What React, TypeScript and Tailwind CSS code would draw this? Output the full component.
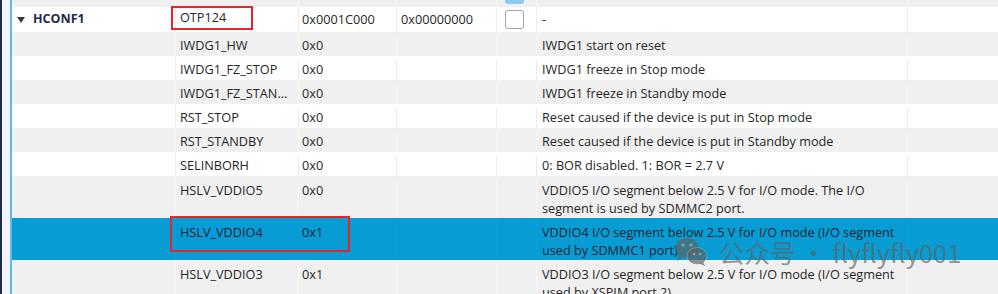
import React from "react";

type Row = {
  name: string;
  value: string;
  desc: string[];
  tall?: boolean;
  selected?: boolean;
  boxed?: boolean;
};

const ROWS: Row[] = [
  { name: "IWDG1_HW", value: "0x0", desc: ["IWDG1 start on reset"] },
  { name: "IWDG1_FZ_STOP", value: "0x0", desc: ["IWDG1 freeze in Stop mode"] },
  { name: "IWDG1_FZ_STAN...", value: "0x0", desc: ["IWDG1 freeze in Standby mode"] },
  { name: "RST_STOP", value: "0x0", desc: ["Reset caused if the device is put in Stop mode"] },
  { name: "RST_STANDBY", value: "0x0", desc: ["Reset caused if the device is put in Standby mode"] },
  { name: "SELINBORH", value: "0x0", desc: ["0: BOR disabled. 1: BOR = 2.7 V"] },
  {
    name: "HSLV_VDDIO5",
    value: "0x0",
    desc: ["VDDIO5 I/O segment below 2.5 V for I/O mode. The I/O", "segment is used by SDMMC2 port."],
    tall: true,
  },
  {
    name: "HSLV_VDDIO4",
    value: "0x1",
    desc: ["VDDIO4 I/O segment below 2.5 V for I/O mode (I/O segment", "used by SDMMC1 port)"],
    tall: true,
    selected: true,
    boxed: true,
  },
  {
    name: "HSLV_VDDIO3",
    value: "0x1",
    desc: ["VDDIO3 I/O segment below 2.5 V for I/O mode (I/O segment", "used by XSPIM port 2)"],
    tall: true,
  },
];

function rowBg(i: number, selected?: boolean) {
  if (selected) return "bg-[#079dd4]";
  return i % 2 === 0 ? "bg-[#f0f0f0]" : "bg-white";
}

function divider(i: number, selected?: boolean) {
  if (selected) return "border-[#0a9fd5]";
  return i % 2 === 0 ? "border-[#f8f8f8]" : "border-[#ececec]";
}

function WeChatMark() {
  return (
    <svg width="34" height="30" viewBox="0 0 34 30" fill="currentColor">
      <ellipse cx="13" cy="11" rx="12" ry="10" />
      <path d="M5 18 L3 24 L10 20 Z" />
      <ellipse cx="23" cy="19" rx="10" ry="8.5" stroke="#ffffff" strokeOpacity="0.25" strokeWidth="1" />
      <path d="M29 25 L31 29 L25 26.5 Z" />
      <circle cx="9" cy="8" r="1.6" fill="#ffffff" fillOpacity="0.35" />
      <circle cx="17" cy="8" r="1.6" fill="#ffffff" fillOpacity="0.35" />
      <circle cx="20" cy="17" r="1.3" fill="#ffffff" fillOpacity="0.35" />
      <circle cx="26" cy="17" r="1.3" fill="#ffffff" fillOpacity="0.35" />
    </svg>
  );
}

export default function App() {
  return (
    <div
      className="relative flex w-[998px] h-[294px] overflow-hidden bg-white text-[12.7px] text-[#262626]"
      style={{ fontFamily: '"Open Sans", "Noto Sans", sans-serif' }}
    >
      {/* window edge + tree guide */}
      <div className="w-[2px] bg-[#1c2c4c]" />
      <div className="w-[8px] bg-[#f3f4f5]" />
      <div className="w-[2px] bg-[#5cbde8]" />

      <div className="flex flex-col flex-1">
        {/* tail of the previous row */}
        <div className="flex shrink-0 h-[7px] bg-[#f0f0f0]">
          <div className="w-[164px] border-r border-[#f8f8f8]" />
          <div className="w-[123px] border-r border-[#f8f8f8]" />
          <div className="w-[98px] border-r border-[#f8f8f8]" />
          <div className="w-[100px] border-r border-[#f8f8f8]" />
          <div className="w-[40px] border-r border-[#f8f8f8] pl-2">
            <div className="w-[19px] h-[4px] rounded-b-[3px] bg-[#8fc9ee]" />
          </div>
          <div className="w-[371px] border-r border-[#f8f8f8]" />
          <div className="flex-1" />
        </div>

        {/* register row */}
        <div className="flex shrink-0 h-[25px] items-center bg-white">
          <div className="w-[164px] h-full flex items-center gap-[8px] pl-[5px] border-r border-[#ececec]">
            <svg width="8" height="6" viewBox="0 0 8 6" className="text-[#3a3a3a]">
              <path d="M0 0 H8 L4 6 Z" fill="currentColor" />
            </svg>
            <span className="font-bold text-[12.5px] text-[#1c2a48]">HCONF1</span>
          </div>
          <div className="w-[123px] h-full border-r border-[#ececec]">
            <div className="-ml-[5px] -mt-[1px] flex items-center h-[24px] w-[82px] pl-[7px] border-2 border-[#e3262b]">
              OTP124
            </div>
          </div>
          <div className="w-[98px] h-full flex items-center pl-[3px] border-r border-[#ececec]">0x0001C000</div>
          <div className="w-[100px] h-full flex items-center pl-[4px] border-r border-[#ececec]">0x00000000</div>
          <div className="w-[40px] h-full flex items-center pl-2 border-r border-[#ececec]">
            <div className="w-[19px] h-[19px] rounded-[3px] border border-[#a3a3a3] bg-white" />
          </div>
          <div className="w-[371px] h-full flex items-center pl-[5px] border-r border-[#ececec]">-</div>
          <div className="flex-1" />
        </div>

        {ROWS.map((r, i) => {
          const bd = divider(i, r.selected);
          return (
            <div
              key={r.name}
              className={`flex shrink-0 ${r.tall ? "h-[42px] pt-[5px]" : "h-6 pt-[4px]"} leading-[18px] ${rowBg(i, r.selected)} ${r.selected ? "text-[#1d2330]" : ""}`}
            >
              <div className={`w-[164px] ${r.tall ? "-mt-[5px]" : "-mt-[4px]"} border-r ${bd}`} />
              {r.boxed ? (
                <>
                  <div className="w-[180px] h-[36px] -mt-[7px] -ml-[6px] flex items-start border-2 border-[#e3262b] pt-[5px]">
                    <div className="w-[130px] pl-[8px]">{r.name}</div>
                    <div>{r.value}</div>
                  </div>
                  <div className={`w-[47px] border-r ${bd}`} />
                </>
              ) : (
                <>
                  <div className={`w-[123px] pl-[4px] border-r ${bd} whitespace-nowrap overflow-hidden`}>{r.name}</div>
                  <div className={`w-[98px] pl-[3px] border-r ${bd}`}>{r.value}</div>
                </>
              )}
              <div className={`w-[100px] border-r ${bd}`} />
              <div className={`w-[40px] border-r ${bd}`} />
              <div className={`w-[371px] pl-[5px] border-r ${bd}`}>
                {r.desc.map((line) => (
                  <div key={line} className="whitespace-nowrap">{line}</div>
                ))}
              </div>
              <div className="flex-1" />
            </div>
          );
        })}
      </div>

      {/* watermark */}
      <div className="absolute left-[674px] top-[237px] flex items-center gap-[11px] text-[#606060]/65 pointer-events-none">
        <WeChatMark />
        <span
          className="text-[25.5px] leading-none whitespace-nowrap"
          style={{ fontFamily: '"Noto Sans CJK SC", "Noto Sans", sans-serif' }}
        >
          公众号 · flyflyfly001
        </span>
      </div>
    </div>
  );
}
